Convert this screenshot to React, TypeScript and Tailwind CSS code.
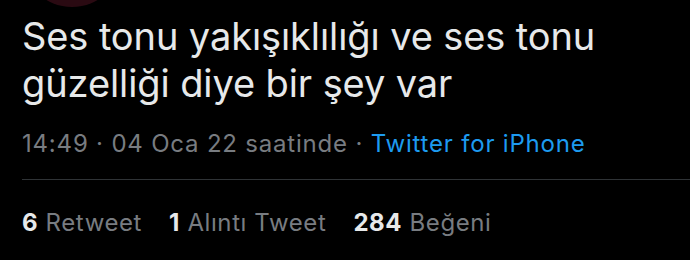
export default function App() {
  return (
    <div
      className="w-[690px] h-[260px] bg-black overflow-hidden relative"
      style={{ fontFamily: "Inter, 'Noto Sans', sans-serif" }}
    >
      {/* avatar edge peeking from above */}
      <div className="absolute left-[22px] -top-[93px] w-[100px] h-[100px] rounded-full bg-[#2a0a12]" />
      <div className="pl-[22px] pt-[13px]">
        <p className="text-[38px] leading-[47px] text-[#e7e9ea] tracking-[-0.1px]">
          Ses tonu yakışıklılığı ve ses tonu
          <br />
          güzelliği diye bir şey var
        </p>
        <div className="mt-[22px] text-[24px] leading-[30px] tracking-[0.8px] text-[#787c81]">
          14:49 · 04 Oca 22 saatinde · <span className="text-[#1d9bf0]">Twitter for iPhone</span>
        </div>
      </div>
      <div className="ml-[22px] mt-[20px] h-px bg-[#2f3336]" />
      <div className="pl-[22px] pt-[28px] flex gap-[27px] text-[24px] leading-[30px] tracking-[0.6px] text-[#787c81]">
        <span>
          <b className="text-[#e7e9ea] font-bold">6</b> Retweet
        </span>
        <span>
          <b className="text-[#e7e9ea] font-bold">1</b> Alıntı Tweet
        </span>
        <span>
          <b className="text-[#e7e9ea] font-bold">284</b> Beğeni
        </span>
      </div>
    </div>
  );
}
